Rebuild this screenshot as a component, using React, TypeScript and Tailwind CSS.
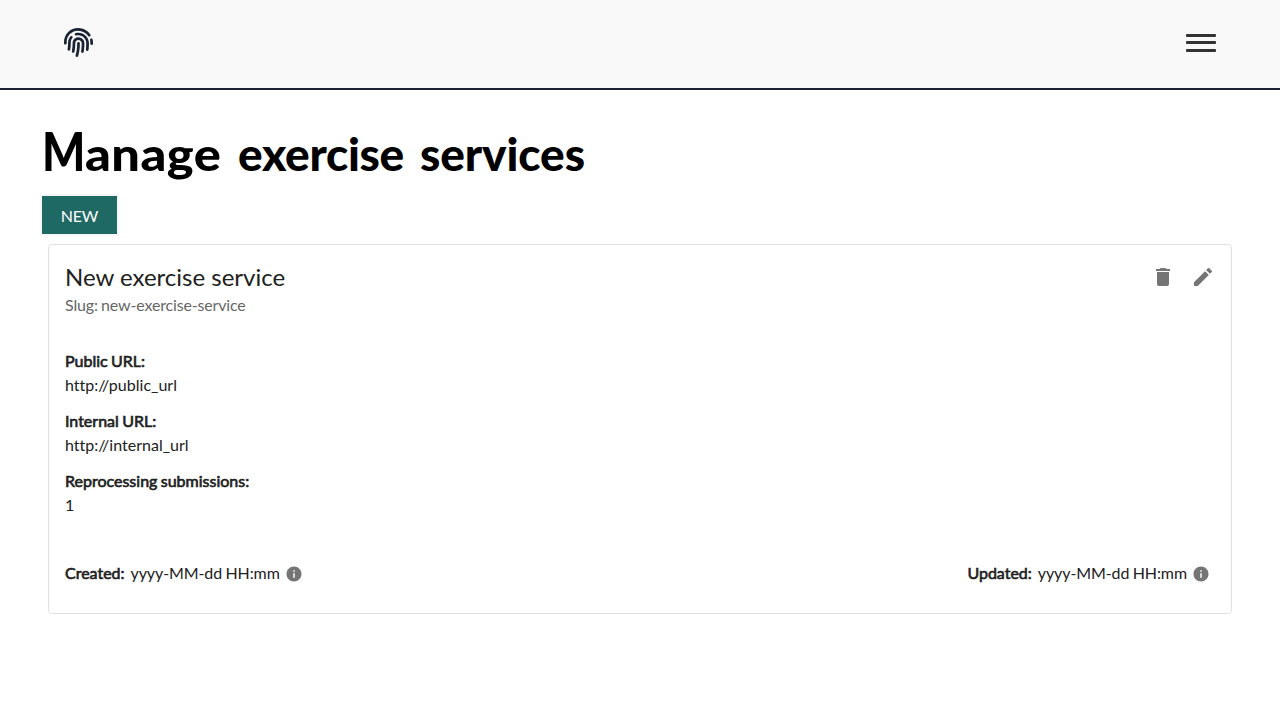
import { FaFingerprint } from "react-icons/fa";
import { MdDelete, MdEdit, MdInfo } from "react-icons/md";

function Label({ children }: { children: string }) {
  return <span className="[word-spacing:-0.7px] [-webkit-text-stroke:0.65px_#212121]">{children}</span>;
}

function Field({ label, value }: { label: string; value: string }) {
  return (
    <div className="mb-3 leading-6">
      <div><Label>{label}</Label></div>
      <div className="tracking-[0.02px]">{value}</div>
    </div>
  );
}

function Timestamp({ label }: { label: string }) {
  return (
    <div className="flex items-center leading-6">
      <Label>{label}</Label>
      <span className="ml-1.5 tracking-[-0.1px] [word-spacing:-0.6px]">yyyy-MM-dd HH:mm</span>
      <MdInfo className="ml-[5px] mt-0.5 size-[18px] text-[#757575]" />
    </div>
  );
}

export default function App() {
  return (
    <div className="min-h-screen bg-white font-['Lato',sans-serif] text-base text-[#212121]">
      <header className="flex h-[90px] items-start justify-between border-b-2 border-[#1a2333] bg-[#f9f9f9] px-16">
        <FaFingerprint className="mt-7 size-[29px] text-[#1a2333]" />
        <button aria-label="Menu" className="mt-[34px] flex w-[30px] flex-col">
          <span className="h-[3px] w-full rounded-[1px] bg-[#333]" />
          <span className="mt-1 h-[3px] w-full rounded-[1px] bg-[#333]" />
          <span className="mt-[5px] h-[3px] w-full rounded-[1px] bg-[#333]" />
        </button>
      </header>
      <main>
        <h1 className="mt-[30px] ml-[42px] flex h-[62px] items-baseline text-[46px] leading-[62px] font-black whitespace-nowrap text-black">
          <span className="w-[196px]"><span className="inline-block w-[43px] origin-left scale-x-[0.86] text-[53px]">M</span><span className="inline-block origin-left scale-x-[1.1] tracking-[0.4px]">anage</span></span>
          <span className="w-[182px] tracking-[-0.3px]">exercise</span>
          <span className="tracking-[-0.1px]">services</span>
        </h1>
        <button className="mt-3.5 ml-[42px] block h-[38px] w-[75px] bg-[#1f6964] pb-px leading-[38px] text-white shadow-[0_0_0_2px_#f5f6f7]">
          <span className="block pt-px tracking-[-0.2px]">NEW</span>
        </button>
        <section className="mx-12 mt-2.5 h-[370px] rounded border border-[#e0e0e0] px-4 pt-4">
          <div className="flex justify-between">
            <div>
              <h2 className="text-2xl leading-8">New exercise service</h2>
              <p className="leading-6 tracking-[-0.16px] text-[#666] [word-spacing:-0.6px]">Slug: new-exercise-service</p>
            </div>
            <div className="mt-1 flex gap-4 text-[#757575]">
              <MdDelete className="size-6" />
              <MdEdit className="size-6" />
            </div>
          </div>
          <div className="mt-8">
            <Field label="Public URL:" value="http://public_url" />
            <Field label="Internal URL:" value="http://internal_url" />
            <Field label="Reprocessing submissions:" value="1" />
          </div>
          <div className="mt-11 flex justify-between pr-[5px]">
            <Timestamp label="Created:" />
            <Timestamp label="Updated:" />
          </div>
        </section>
      </main>
    </div>
  );
}
